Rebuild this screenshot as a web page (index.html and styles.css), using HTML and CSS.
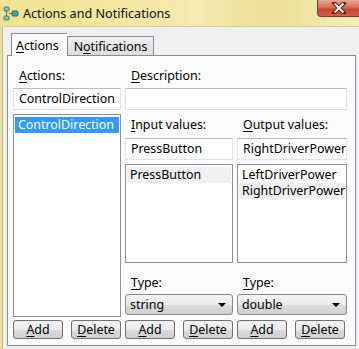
FILE: index.html
```html
<!DOCTYPE html>
<html lang="en">
<head>
  <meta charset="UTF-8" />
  <title>Actions and Notifications</title>
  <link rel="stylesheet" href="styles.css">
</head>
<body>
  <div class="window">
    <!-- Title bar -->
    <div class="titlebar">
      <svg class="app-icon" width="16" height="16" viewBox="0 0 16 16">
        <rect x="1" y="1" width="5" height="4" rx="1" fill="#8fc9a8" stroke="#3a7a66" stroke-width="1"/>
        <rect x="1" y="10" width="5" height="4" rx="1" fill="#8fc9a8" stroke="#3a7a66" stroke-width="1"/>
        <rect x="9" y="5" width="6" height="5" rx="1" fill="#4aa5a0" stroke="#2c6b68" stroke-width="1"/>
        <path d="M3.5 5 V10 M6 7.5 H9" stroke="#3a7a66" stroke-width="1" fill="none"/>
      </svg>
      <span class="title">Actions and Notifications</span>
      <div class="close-btn">
        <svg width="14" height="12" viewBox="0 0 14 12">
          <path d="M2 1 L12 11 M12 1 L2 11" stroke="#5a1a12" stroke-width="4" stroke-linecap="square"/>
          <path d="M2.5 1.5 L11.5 10.5 M11.5 1.5 L2.5 10.5" stroke="#ffffff" stroke-width="2"/>
        </svg>
      </div>
    </div>

    <!-- Client area -->
    <div class="client">
      <div class="tab-strip">
        <div class="tab tab-active"><u>A</u>ctions</div>
        <div class="tab">N<u>o</u>tifications</div>
      </div>

      <div class="tab-page">
        <div class="top-grid">
          <div class="label"><u>A</u>ctions:</div>
          <div class="label span2"><u>D</u>escription:</div>
          <div class="textbox">ControlDirection</div>
          <div class="textbox span2"></div>
        </div>

        <div class="body-grid">
          <div class="listbox tall">
            <div class="item item-selected">ControlDirection</div>
          </div>

          <div class="column">
            <div class="label col-label"><u>I</u>nput values:</div>
            <div class="textbox">PressButton</div>
            <div class="listbox short">
              <div class="item item-inactive">PressButton</div>
            </div>
            <div class="label type-label"><u>T</u>ype:</div>
            <div class="combo">string<span class="arrow"></span></div>
          </div>

          <div class="column">
            <div class="label col-label"><u>O</u>utput values:</div>
            <div class="textbox">RightDriverPower</div>
            <div class="listbox short">
              <div class="item">LeftDriverPower</div>
              <div class="item item-inactive">RightDriverPower</div>
            </div>
            <div class="label type-label"><u>T</u>ype:</div>
            <div class="combo">double<span class="arrow"></span></div>
          </div>
        </div>

        <div class="button-grid">
          <div class="button-pair">
            <button class="btn"><u>A</u>dd</button>
            <button class="btn"><u>D</u>elete</button>
          </div>
          <div class="button-pair">
            <button class="btn"><u>A</u>dd</button>
            <button class="btn"><u>D</u>elete</button>
          </div>
          <div class="button-pair">
            <button class="btn"><u>A</u>dd</button>
            <button class="btn"><u>D</u>elete</button>
          </div>
        </div>
      </div>
    </div>
  </div>
</body>
</html>
```

FILE: styles.css
```css
/*
  BASIC RESETS
*/
* {
  margin: 0;
  padding: 0;
  box-sizing: border-box;
}

body {
  width: 359px;
  height: 349px;
  overflow: hidden;
  font-family: "Noto Sans", "Open Sans", sans-serif;
  font-size: 12.4px;
  color: #000;
  background-color: #f0f0f0;
}

u {
  text-decoration: underline;
  text-underline-offset: 2px;
}

/*
  WINDOW FRAME
*/
.window {
  display: flex;
  flex-direction: column;
  height: 349px;
  border-left: 2px solid #eadf9e;
}

.titlebar {
  height: 27px;
  display: flex;
  align-items: center;
  background: linear-gradient(to right, #f1e38f 0%, #f5eab0 55%, #eedf98 75%, #f6edb8 100%);
  border-bottom: 1px solid #d9cd8f;
  position: relative;
}

.app-icon {
  margin-left: 1px;
  margin-top: 2px;
}

.title {
  margin-left: 4px;
  font-size: 12.6px;
  color: #111;
  margin-top: 1px;
}

.close-btn {
  position: absolute;
  top: 0;
  right: -2px;
  width: 44px;
  height: 17px;
  display: flex;
  align-items: center;
  justify-content: center;
  background: linear-gradient(to bottom, #e9a89a 0%, #d8705e 45%, #c7442f 60%, #d4604a 100%);
  border: 1px solid #8d3a2c;
  border-top: none;
  border-bottom-left-radius: 4px;
}

.client {
  flex: 1;
  border-left: 1px solid #c4bb85;
  padding: 6px 2px 3px 4px;
  display: flex;
  flex-direction: column;
}

/*
  TABS
*/
.tab-strip {
  display: flex;
  align-items: flex-end;
  height: 22px;
  padding-left: 4px;
  position: relative;
  z-index: 1;
}

.tab {
  height: 19px;
  padding: 0 6px;
  display: flex;
  align-items: center;
  background: linear-gradient(to bottom, #f2f2f2, #dcdcdc);
  border: 1px solid #898c95;
  border-bottom: none;
}

.tab-active {
  height: 23px;
  margin-bottom: -1px;
  padding: 0 8px 0 4px;
  background: #fcfcfc;
  border-right: none;
}

.tab-page {
  flex: 1;
  width: 349px;
  border: 1px solid #898c95;
  background-color: #fcfcfc;
  padding: 12px 0 0 5px;
}

/*
  FORM CONTENT
*/
.top-grid,
.body-grid,
.button-grid {
  display: grid;
  grid-template-columns: 108px 108px 110px;
  column-gap: 4px;
}

.top-grid {
  row-gap: 4px;
}

.span2 {
  grid-column: span 2;
}

.label {
  height: 16px;
  line-height: 16px;
  padding-left: 6px;
  white-space: nowrap;
}

.textbox {
  height: 22px;
  line-height: 19px;
  padding: 0 5px;
  background: #fff;
  border: 1px solid #dfe3e8;
  border-top-color: #b9bcc2;
  white-space: nowrap;
  overflow: hidden;
}

.body-grid {
  margin-top: 4px;
}

.column {
  display: flex;
  flex-direction: column;
}

.col-label {
  height: 22px;
  line-height: 22px;
  margin-bottom: 2px;
}

.listbox {
  background: #fff;
  border: 1px solid #8e9196;
  padding: 2px 1px;
}

.tall {
  height: 203px;
}

.short {
  height: 99px;
  margin-top: 4px;
}

.item {
  height: 16px;
  line-height: 15px;
  padding-left: 3px;
  white-space: nowrap;
}

.item-selected {
  background-color: #3399ff;
  color: #fff;
}

.item-inactive {
  background-color: #f0f0f0;
}

.type-label {
  margin-top: 12px;
}

.combo {
  position: relative;
  height: 21px;
  margin-top: 3px;
  line-height: 19px;
  padding-left: 4px;
  border: 1px solid #8a8a8a;
  border-radius: 3px;
  background: linear-gradient(to bottom, #f4f4f4 0%, #ebebeb 50%, #dddddd 51%, #cfcfcf 100%);
}

.arrow {
  position: absolute;
  right: 6px;
  top: 8px;
  border-left: 4px solid transparent;
  border-right: 4px solid transparent;
  border-top: 4px solid #000;
}

/*
  BUTTONS
*/
.button-grid {
  margin-top: 3px;
}

.button-pair {
  display: flex;
  gap: 8px;
}

.btn {
  width: 50px;
  height: 19px;
  font-family: inherit;
  font-size: 12.4px;
  color: #000;
  border: 1px solid #707070;
  border-radius: 3px;
  background: linear-gradient(to bottom, #f2f2f2 0%, #ebebeb 50%, #dddddd 51%, #cfcfcf 100%);
  line-height: 16px;
}
```
